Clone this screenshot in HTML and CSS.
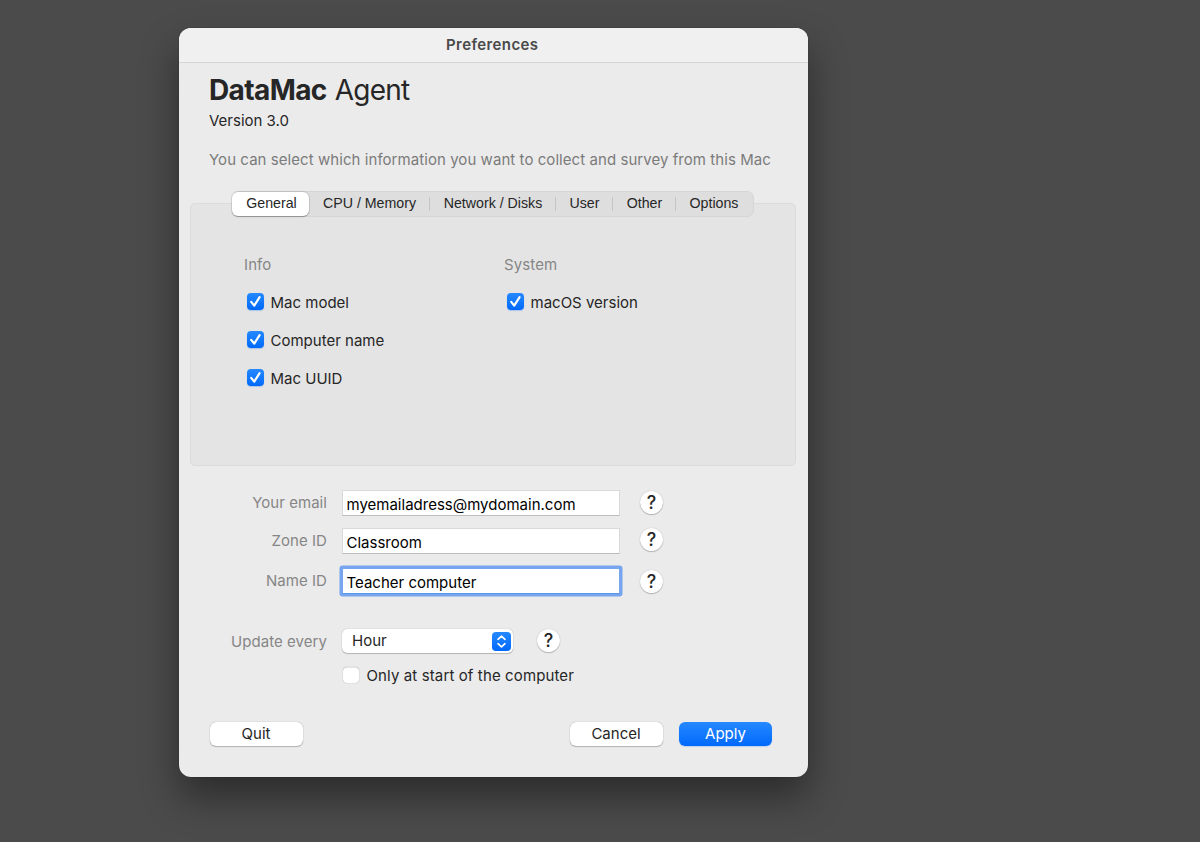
FILE: index.html
```html
<!DOCTYPE html>
<html lang="en">
<head>
    <meta charset="UTF-8">
    <meta name="viewport" content="width=device-width, initial-scale=1.0">
    <title>Preferences</title>
    <link rel="stylesheet" href="styles.css">
</head>
<body>
    <div class="window">
        <div class="titlebar">Preferences</div>

        <div class="header">
            <h1><b>DataMac</b> <span>Agent</span></h1>
            <p class="version">Version 3.0</p>
            <p class="intro">You can select which information you want to collect and survey from this Mac</p>
        </div>

        <div class="panel">
            <div class="tabs">
                <div class="tab active">General</div>
                <div class="tab tab-cpu">CPU / Memory</div>
                <div class="tab tab-network">Network / Disks</div>
                <div class="tab tab-user">User</div>
                <div class="tab tab-other">Other</div>
                <div class="tab tab-options">Options</div>
            </div>
            <div class="columns">
                <div class="column">
                    <h2>Info</h2>
                    <label class="check"><span class="box checked"><svg viewBox="0 0 17 17"><path d="M4.2 8.9l3 3.7 5.4-8.4"/></svg></span><span>Mac model</span></label>
                    <label class="check"><span class="box checked"><svg viewBox="0 0 17 17"><path d="M4.2 8.9l3 3.7 5.4-8.4"/></svg></span><span>Computer name</span></label>
                    <label class="check"><span class="box checked"><svg viewBox="0 0 17 17"><path d="M4.2 8.9l3 3.7 5.4-8.4"/></svg></span><span>Mac UUID</span></label>
                </div>
                <div class="column">
                    <h2>System</h2>
                    <label class="check"><span class="box checked"><svg viewBox="0 0 17 17"><path d="M4.2 8.9l3 3.7 5.4-8.4"/></svg></span><span>macOS version</span></label>
                </div>
            </div>
        </div>

        <form class="form">
            <div class="row">
                <label for="email">Your email</label>
                <input type="text" id="email" value="myemailadress@mydomain.com">
                <button type="button" class="help">?</button>
            </div>
            <div class="row row-zone">
                <label for="zone">Zone ID</label>
                <input type="text" id="zone" value="Classroom">
                <button type="button" class="help">?</button>
            </div>
            <div class="row row-name">
                <label for="name">Name ID</label>
                <input type="text" id="name" class="focused" value="Teacher computer">
                <button type="button" class="help">?</button>
            </div>
            <div class="row row-update">
                <label>Update every</label>
                <div class="select">
                    <span>Hour</span>
                    <svg class="arrows" viewBox="0 0 19 19"><path d="M6 7.3l3.5-3.2L13 7.3M6 11.7l3.5 3.2 3.5-3.2"/></svg>
                </div>
                <button type="button" class="help">?</button>
            </div>
            <label class="check check-start"><span class="box"></span><span>Only at start of the computer</span></label>
        </form>

        <div class="footer">
            <button type="button" class="btn btn-quit">Quit</button>
            <button type="button" class="btn">Cancel</button>
            <button type="button" class="btn primary">Apply</button>
        </div>
    </div>
</body>
</html>
```
FILE: styles.css
```css
* {
    margin: 0;
    padding: 0;
    box-sizing: border-box;
}
body {
    font-family: Inter, "Liberation Sans", sans-serif;
    font-size: 15px;
    line-height: 20px;
    color: #262626;
    background: #4b4b4b;
    height: 842px;
    padding: 28px 0 0 179px;
    overflow: hidden;
}
button, input {
    font: inherit;
    color: inherit;
    border: none;
    outline: none;
}
.window {
    width: 628.5px;
    height: 749px;
    background: #ebebeb;
    border-radius: 12px;
    box-shadow: 0 0 1px rgba(0,0,0,0.6), 0 20px 38px rgba(0,0,0,0.42);
}
.titlebar {
    height: 35px;
    padding-right: 2px;
    background: #f0f0f0;
    border-bottom: 1px solid #d6d6d6;
    border-radius: 12px 12px 0 0;
    font-weight: 600;
    line-height: 33px;
    letter-spacing: 0.4px;
    text-align: center;
    color: #4a4a4a;
}
.header {
    padding: 10px 30px 0;
    white-space: nowrap;
}
h1 {
    font-size: 28px;
    font-weight: 400;
    line-height: 35px;
    letter-spacing: -0.8px;
}
h1 b {
    margin-right: 1px;
    font-weight: 700;
    letter-spacing: -0.6px;
}
.version {
    margin-top: 3px;
}
.intro {
    margin-top: 19px;
    letter-spacing: 0.06px;
    color: #7b7b7b;
}
.panel {
    width: 606px;
    height: 263px;
    margin: 33px 0 0 11px;
    background: #e4e4e4;
    border: 1px solid #dbdbdb;
    border-radius: 5px;
}
.tabs {
    display: flex;
    width: 522px;
    height: 26px;
    margin: -13px 0 0 41px;
    background: #dedede;
    border: 1px solid #d5d5d5;
    border-radius: 7px;
    font-family: "Liberation Sans", Arial, sans-serif;
    font-size: 14.2px;
    line-height: 22px;
}
.tab {
    display: flex;
    justify-content: center;
    position: relative;
    white-space: nowrap;
}
.tab.active {
    width: 77px;
    height: 24px;
    margin-left: -1px;
    padding-left: 2px;
    background: #fff;
    border-radius: 6px;
    box-shadow: 0 0 1px 1px rgba(0,0,0,0.1), 0 1px 1px rgba(0,0,0,0.25);
}
.tab-cpu { width: 121px; }
.tab-network { width: 126px; }
.tab-user { width: 57px; }
.tab-other { width: 63px; }
.tab-options { width: 76px; }
.tab:not(.active):not(:last-child)::after {
    content: "";
    position: absolute;
    right: 0;
    top: 5px;
    width: 1px;
    height: 14px;
    background: #c6c6c6;
}
.columns {
    display: flex;
    padding: 38px 0 0 53px;
}
.column {
    width: 260px;
}
h2 {
    margin-bottom: 8px;
    font-size: 15px;
    font-weight: 400;
    letter-spacing: 0.1px;
    color: #868686;
}
.check {
    display: flex;
    align-items: center;
    height: 38px;
    padding: 1px 0 0 2.5px;
    white-space: nowrap;
}
.box {
    width: 16px;
    height: 16px;
    margin: 0 8px 2px 0;
    background: #fff;
    border-radius: 4px;
    box-shadow: 0 0 1px rgba(0,0,0,0.4), inset 0 1px 1px rgba(0,0,0,0.1);
}
.box.checked {
    width: 17px;
    height: 17px;
    margin-right: 7px;
    background: linear-gradient(#2689ff, #0069fb);
    box-shadow: 0 1px 1px rgba(0,100,255,0.25);
}
.box svg {
    display: block;
    fill: none;
    stroke: #fff;
    stroke-width: 2.2;
    stroke-linecap: round;
    stroke-linejoin: round;
}
.form {
    padding: 24px 0 0 30px;
}
.row {
    display: flex;
    align-items: center;
    height: 26px;
}
.row label {
    width: 118px;
    margin-right: 15px;
    text-align: right;
    letter-spacing: 0.05px;
    color: #868686;
}
.row input {
    width: 278px;
    height: 26px;
    padding: 3px 3.5px 0;
    background: #fff;
    border: 1px solid #d9d9d9;
    border-bottom-color: #bdbdbd;
    color: #000;
}
.row input.focused {
    border-color: #78a5ef;
    border-bottom-color: #5e94e6;
    box-shadow: 0 0 0 2.5px #78a5ef;
    border-radius: 1px;
}
.help {
    width: 23px;
    height: 23px;
    margin: -1px 0 0 20px;
    background: #fff;
    border-radius: 50%;
    box-shadow: 0 0 1px rgba(0,0,0,0.3), 0 1px 1px rgba(0,0,0,0.2);
    font-size: 18px;
    font-weight: 500;
    line-height: 23px;
}
.row-zone {
    margin-top: 12px;
}
.row-zone .help {
    margin-top: -3px;
}
.row-name {
    margin-top: 14px;
}
.row-name .help {
    margin-top: 1px;
}
.row-update {
    margin-top: 34px;
}
.row-update label {
    padding-top: 1px;
}
.row-update .help {
    margin-left: 24px;
}
.select {
    display: flex;
    align-items: center;
    justify-content: space-between;
    width: 171px;
    height: 24px;
    padding: 0 2px 0 10px;
    background: #fff;
    border-radius: 5px;
    box-shadow: 0 0 1px rgba(0,0,0,0.35), 0 1px 1px rgba(0,0,0,0.2);
}
.arrows {
    width: 19px;
    height: 19px;
    background: linear-gradient(#2689ff, #0069fb);
    border-radius: 4px;
    fill: none;
    stroke: #fff;
    stroke-width: 1.7;
    stroke-linecap: round;
    stroke-linejoin: round;
}
.check-start {
    height: 20px;
    margin-top: 12px;
    padding: 0 0 0 133.5px;
    letter-spacing: 0.12px;
}
.footer {
    display: flex;
    padding: 36px 0 0 31px;
}
.btn {
    width: 93px;
    height: 24px;
    margin-right: 16px;
    padding-right: 1px;
    background: #fff;
    border-radius: 6px;
    box-shadow: 0 0 1px rgba(0,0,0,0.4), 0 1px 1px rgba(0,0,0,0.22);
}
.btn-quit {
    margin-right: 267px;
}
.btn.primary {
    padding-right: 0;
    background: linear-gradient(#2689ff, #0069fb);
    box-shadow: 0 1px 1px rgba(0,100,255,0.2);
    color: #fff;
}
```
